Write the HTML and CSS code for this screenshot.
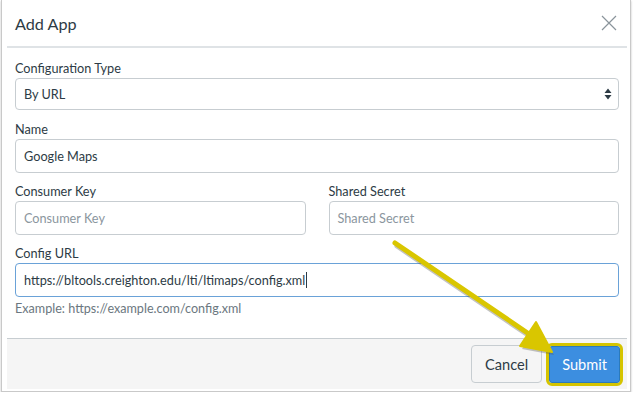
FILE: index.html
```html
<!DOCTYPE html>
<html>
<head>
    <meta charset="utf-8">
    <title>Add App</title>
    <link rel="stylesheet" href="styles.css">
</head>
<body>
    <div class="shot">
        <div class="dialog">
            <div class="dialog-header">
                <h1>Add App</h1>
                <span class="close">
                    <svg width="16" height="16" viewBox="0 0 16 16">
                        <path d="M1 1 L15 15 M15 1 L1 15" stroke="#8a949b" stroke-width="1.2" fill="none"/>
                    </svg>
                </span>
            </div>

            <div class="dialog-body">
                <label class="field-label">Configuration Type</label>
                <div class="select">
                    <span>By URL</span>
                    <svg class="caret" width="8" height="12" viewBox="0 0 8 12">
                        <path d="M4 0.5 L7.5 5 L0.5 5 Z M0.5 7 L7.5 7 L4 11.5 Z" fill="#2d3b45"/>
                    </svg>
                </div>

                <label class="field-label">Name</label>
                <div class="input">Google Maps</div>

                <div class="two-col">
                    <div>
                        <label class="field-label">Consumer Key</label>
                        <div class="input placeholder">Consumer Key</div>
                    </div>
                    <div>
                        <label class="field-label">Shared Secret</label>
                        <div class="input placeholder">Shared Secret</div>
                    </div>
                </div>

                <label class="field-label">Config URL</label>
                <div class="input focused">https://bltools.creighton.edu/lti/ltimaps/config.xml<span class="cursor"></span></div>
                <p class="hint">Example: https://example.com/config.xml</p>
            </div>

            <div class="dialog-footer">
                <button class="btn">Cancel</button>
                <span class="highlight"><button class="btn btn-primary">Submit</button></span>
            </div>
        </div>

        <!-- annotation arrow drawn over the dialog -->
        <svg class="arrow" width="634" height="396" viewBox="0 0 634 396">
            <g transform="translate(2,3)" opacity="0.35">
                <path d="M394 243 L528 334" stroke="#555" stroke-width="5" stroke-linecap="round"/>
                <path d="M551 352 L519 346 L535 322 Z" fill="#555"/>
            </g>
            <path d="M394 243 L528 334" stroke="#d9c600" stroke-width="5" stroke-linecap="round"/>
            <path d="M551 352 L519 346 L535 322 Z" fill="#d9c600" stroke="#d9c600" stroke-width="2" stroke-linejoin="round"/>
        </svg>
    </div>
</body>
</html>
```

FILE: styles.css
```css
body {
    margin: 0;
    font-family: Lato, "Open Sans", sans-serif;
    color: #2d3b45;
    background: #fff;
}
.shot {
    position: relative;
    width: 630px;
    height: 392px;
    margin-left: 1px;
    padding: 0 2px 0 5px;
    border: 1px solid #c9c9c9;
    border-top: none;
    box-shadow: 0 1px 2px rgba(0, 0, 0, 0.25);
    box-sizing: border-box;
}
.dialog {
    width: 620px;
}
.dialog-header {
    height: 48px;
    border-bottom: 2px solid #dfe3e6;
    display: flex;
    align-items: center;
    justify-content: space-between;
    padding: 0 10px 0 8px;
    box-sizing: border-box;
}
.dialog-header h1 {
    margin: 0;
    font-size: 16.2px;
    font-weight: normal;
}
.close {
    display: flex;
}
.dialog-body {
    padding: 10px 8px 2px;
}
.field-label {
    display: block;
    font-size: 12.7px;
    line-height: 20px;
    height: 20px;
}
.select,
.input {
    height: 34px;
    border: 1px solid #c7cdd1;
    border-radius: 4px;
    box-sizing: border-box;
    padding: 0 8px;
    display: flex;
    align-items: center;
    font-size: 12.7px;
    margin-bottom: 8px;
}
.select {
    height: 32px;
    margin-bottom: 9px;
    justify-content: space-between;
    padding-right: 6px;
}
.placeholder {
    color: #8b969e;
}
.focused {
    border-color: #6aa2d8;
}
.cursor {
    display: inline-block;
    width: 1px;
    height: 16px;
    margin-left: 1px;
    background: #2d3b45;
}
.two-col {
    display: grid;
    grid-template-columns: 1fr 1fr;
    gap: 23px;
}
.hint {
    margin: -6px 0 0;
    font-size: 12.6px;
    line-height: 20px;
    color: #6b7780;
    height: 26px;
}
.dialog-footer {
    height: 50px;
    margin-top: 11px;
    border-top: 1px solid #c7cdd1;
    background: #f5f5f5;
    display: flex;
    justify-content: flex-end;
    align-items: center;
    gap: 4px;
    padding: 0 4px 0 0;
}
.btn {
    font-family: Lato, "Open Sans", sans-serif;
    font-size: 14.6px;
    height: 38px;
    padding: 0 13px;
    background: #f5f5f5;
    color: #2d3b45;
    border: 1px solid #c7cdd1;
    border-radius: 4px;
}
.highlight {
    display: flex;
    border: 3px solid #d5c400;
    border-radius: 6px;
}
.btn-primary {
    height: 37px;
    padding: 0 12px;
    background: #3c8ee0;
    border-color: #2b7abc;
    color: #fff;
    border-radius: 3px;
}
.arrow {
    position: absolute;
    left: -1px;
    top: 0;
    pointer-events: none;
}
```
